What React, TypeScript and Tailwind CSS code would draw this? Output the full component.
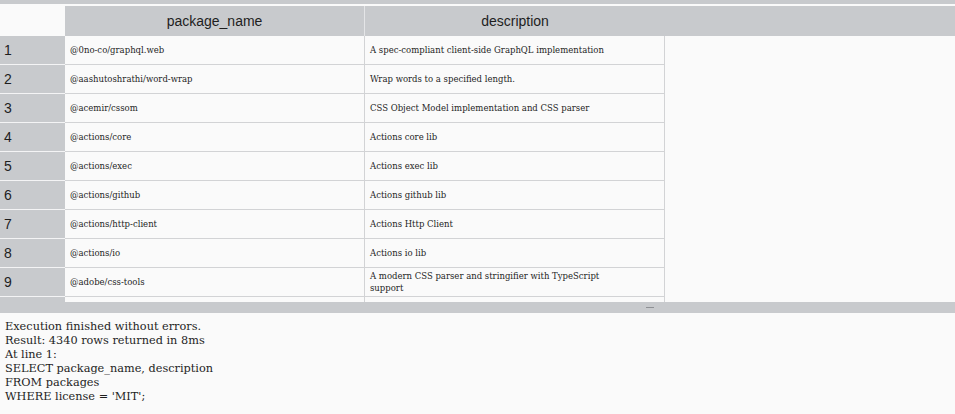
const rows = [
  ["@0no-co/graphql.web", "A spec-compliant client-side GraphQL implementation"],
  ["@aashutoshrathi/word-wrap", "Wrap words to a specified length."],
  ["@acemir/cssom", "CSS Object Model implementation and CSS parser"],
  ["@actions/core", "Actions core lib"],
  ["@actions/exec", "Actions exec lib"],
  ["@actions/github", "Actions github lib"],
  ["@actions/http-client", "Actions Http Client"],
  ["@actions/io", "Actions io lib"],
  ["@adobe/css-tools", "A modern CSS parser and stringifier with TypeScript\nsupport"],
];

const log = [
  "Execution finished without errors.",
  "Result: 4340 rows returned in 8ms",
  "At line 1:",
  "SELECT package_name, description",
  "FROM packages",
  "WHERE license = 'MIT';",
];

const App = () => {
  return (
    <div className="w-[955px] h-[414px] flex flex-col bg-[#fafafa] overflow-hidden text-[#1e1e1e]">
      <div className="h-[4px] bg-[#c8cacd]" />
      <div className="h-[2px] bg-[#fafafa]" />

      {/* Results grid */}
      <div className="h-[296px] overflow-hidden">
        <div className="flex h-[30px] bg-[#c8cacd] font-['Liberation_Sans',sans-serif] text-[14px]">
          <div className="w-[65px] bg-[#fafafa]" />
          <div className="w-[300px] flex items-center justify-center border-r border-[#e4e5e7]">
            package_name
          </div>
          <div className="w-[300px] flex items-center justify-center">
            description
          </div>
        </div>

        {rows.map(([name, desc], i) => (
          <div key={name} className="flex h-[29px]">
            <div className="w-[65px] shrink-0 bg-[#c8cacd] border-b border-[#f4f4f5] flex items-center pl-[4px] font-['Liberation_Sans',sans-serif] text-[14px]">
              {i + 1}
            </div>
            <div className="w-[300px] shrink-0 border-b border-r border-[#d2d3d5] flex items-center px-[5px] font-['DejaVu_Serif',serif] text-[8.5px] leading-[12px]">
              {name}
            </div>
            <div className="w-[300px] shrink-0 border-b border-r border-[#d2d3d5] flex items-center px-[5px] font-['DejaVu_Serif',serif] text-[8.5px] leading-[12px] whitespace-pre-line">
              {desc}
            </div>
          </div>
        ))}

        {/* partially scrolled-in next row */}
        <div className="flex h-[29px]">
          <div className="w-[65px] shrink-0 bg-[#c8cacd]" />
          <div className="w-[300px] shrink-0 border-r border-[#d2d3d5]" />
          <div className="w-[300px] shrink-0 border-r border-[#d2d3d5]" />
        </div>
      </div>

      {/* Splitter */}
      <div className="h-[11px] bg-[#c8cacd] flex items-center">
        <div className="ml-[646px] w-[8px] h-px bg-[#8e9094]" />
      </div>

      {/* Message pane */}
      <div className="flex-1 px-[5px] pt-[7px] font-['DejaVu_Serif',serif] text-[11.3px] leading-[14px]">
        {log.map((line) => (
          <div key={line}>{line}</div>
        ))}
      </div>
    </div>
  );
};

export default App;
